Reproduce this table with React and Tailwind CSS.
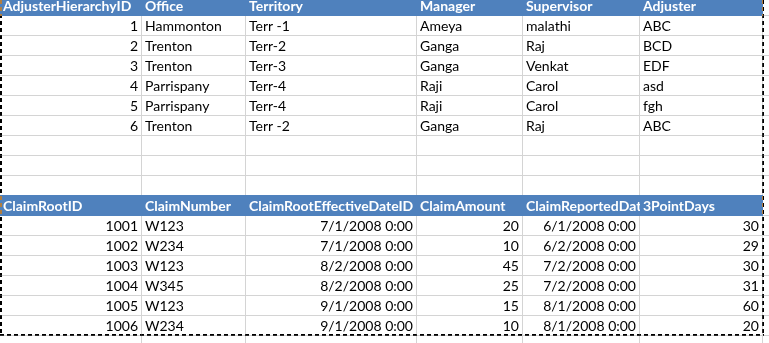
import React from "react";

const widths = ["w-[142px]", "w-[104px]", "w-[171px]", "w-[106px]", "w-[117px]", "w-[123px]"];

const t1Head = ["AdjusterHierarchyID", "Office", "Territory", "Manager", "Supervisor", "Adjuster"];
const t1Rows = [
  ["1", "Hammonton", "Terr -1", "Ameya", "malathi", "ABC"],
  ["2", "Trenton", "Terr-2", "Ganga", "Raj", "BCD"],
  ["3", "Trenton", "Terr-3", "Ganga", "Venkat", "EDF"],
  ["4", "Parrispany", "Terr-4", "Raji", "Carol", "asd"],
  ["5", "Parrispany", "Terr-4", "Raji", "Carol", "fgh"],
  ["6", "Trenton", "Terr -2", "Ganga", "Raj", "ABC"],
];
const t1Align = [true, false, false, false, false, false];

const t2Head = ["ClaimRootID", "ClaimNumber", "ClaimRootEffectiveDateID", "ClaimAmount", "ClaimReportedDat", "3PointDays"];
const t2Rows = [
  ["1001", "W123", "7/1/2008 0:00", "20", "6/1/2008 0:00", "30"],
  ["1002", "W234", "7/1/2008 0:00", "10", "6/2/2008 0:00", "29"],
  ["1003", "W123", "8/2/2008 0:00", "45", "7/2/2008 0:00", "30"],
  ["1004", "W345", "8/2/2008 0:00", "25", "7/2/2008 0:00", "31"],
  ["1005", "W123", "9/1/2008 0:00", "15", "8/1/2008 0:00", "60"],
  ["1006", "W234", "9/1/2008 0:00", "10", "8/1/2008 0:00", "20"],
];
const t2Align = [true, false, true, true, true, true];

function HeaderRow({ cells, extra }) {
  return (
    <div className={`flex h-[21px] shrink-0 ${extra}`}>
      {cells.map((c, i) => (
        <div
          key={i}
          className={`${widths[i]} shrink-0 overflow-hidden whitespace-nowrap bg-[#4F81BD] pl-[3px] text-[14px] leading-[21px] font-bold text-white`}
        >
          {c}
        </div>
      ))}
      <div className="flex-1 border-b border-[#D4D4D4] bg-white" />
    </div>
  );
}

function DataRow({ cells, right, noBorder }) {
  return (
    <div className={`flex shrink-0 ${noBorder ? "h-[19px]" : "h-[20px] border-b border-[#D4D4D4]"}`}>
      {widths.map((w, i) => (
        <div
          key={i}
          className={`${w} shrink-0 overflow-hidden whitespace-nowrap border-r border-[#D4D4D4] text-[14px] leading-[19px] text-black ${
            right && right[i] ? "pr-[3px] text-right" : "pl-[3px] text-left"
          }`}
        >
          {cells ? cells[i] : ""}
        </div>
      ))}
      <div className="flex-1" />
    </div>
  );
}

export default function App() {
  return (
    <div className="relative isolate h-[343px] w-[769px] overflow-hidden bg-white font-['Lato','Liberation_Sans',sans-serif]">
      <div className="flex flex-col">
        <HeaderRow cells={t1Head} extra="-mt-[5px]" />
        {t1Rows.map((r, i) => (
          <DataRow key={i} cells={r} right={t1Align} />
        ))}
        <DataRow />
        <DataRow />
        <DataRow noBorder />
        <HeaderRow cells={t2Head} extra="" />
        {t2Rows.map((r, i) => (
          <DataRow key={i} cells={r} right={t2Align} />
        ))}
        <DataRow />
      </div>
      {/* marching-ants selection border */}
      <div className="pointer-events-none absolute left-0 top-0 h-[336px] w-[2px] bg-[image:repeating-linear-gradient(to_bottom,#fff_0_4px,transparent_4px_7px)] mix-blend-difference" />
      <div className="pointer-events-none absolute left-[762px] top-0 h-[336px] w-[2px] bg-[image:repeating-linear-gradient(to_bottom,#fff_0_4px,transparent_4px_7px)] mix-blend-difference" />
      <div className="pointer-events-none absolute left-0 top-[334px] h-[2px] w-[764px] bg-[image:repeating-linear-gradient(to_right,#fff_0_4px,transparent_4px_7px)] mix-blend-difference" />
    </div>
  );
}
